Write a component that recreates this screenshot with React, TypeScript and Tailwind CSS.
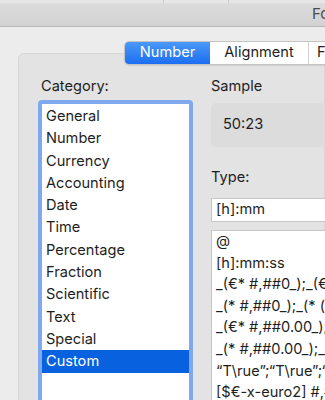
import React from 'react'

const categories = [
  'General',
  'Number',
  'Currency',
  'Accounting',
  'Date',
  'Time',
  'Percentage',
  'Fraction',
  'Scientific',
  'Text',
  'Special',
  'Custom',
]

const formats = [
  '@',
  '[h]:mm:ss',
  '_(€* #,##0_);_(€* (#,##0);_(€* "-"_);_(@_)',
  '_(* #,##0_);_(* (#,##0);_(* "-"_);_(@_)',
  '_(€* #,##0.00_);_(€* (#,##0.00);_(€* "-"??_);_(@_)',
  '_(* #,##0.00_);_(* (#,##0.00);_(* "-"??_);_(@_)',
  '“T\\rue”;“T\\rue”;“F\\alse”',
  '[$€-x-euro2] #,##0.00',
  '0.00%',
]

const tabs = ['Number', 'Alignment', 'Font']

export default function App() {
  return (
    <div
      className="h-[400px] w-[325px] overflow-hidden bg-[#ececec] text-[14.6px] text-[#1e1e1e]"
      style={{ fontFamily: 'Inter, "Noto Sans", sans-serif' }}
    >
      {/* toolbar remnant + title bar */}
      <div className="flex h-[3px] bg-[#e6e6e6]">
        <div className="w-[163px]" />
        <div className="w-px bg-[#c9c9c9]" />
        <div className="w-[64px]" />
        <div className="w-px bg-[#c9c9c9]" />
      </div>
      <div className="flex h-[24px] items-center border-b border-[#b9b9b9] bg-gradient-to-b from-[#dcdcdc] to-[#d2d2d2] pl-[312px]">
        <span className="whitespace-nowrap text-[15px] text-[#4a4a4a]">Format Cells</span>
      </div>

      {/* tabs */}
      <div className="relative z-10 mt-[14px] flex h-[24px] pl-[124px]">
        <div className="flex shrink-0 overflow-hidden rounded-[5px] border border-[#c4c4c4] bg-white shadow-[0_1px_1px_rgba(0,0,0,0.08)]">
          {tabs.map((t, i) => (
            <div
              key={t}
              className={
                i === 0
                  ? 'flex w-[85px] shrink-0 items-center justify-center bg-gradient-to-b from-[#4a98f7] to-[#1b6ef0] text-white'
                  : i === 1
                    ? 'flex w-[99px] shrink-0 items-center justify-center border-r border-[#d2d2d2] text-[#1e1e1e]'
                    : 'flex w-[60px] shrink-0 items-center justify-start pl-[8px] text-[#1e1e1e]'
              }
            >
              {t}
            </div>
          ))}
        </div>
      </div>

      {/* group box */}
      <div className="ml-[18px] -mt-[12px] h-[400px] rounded-[6px] border border-[#d6d6d6] bg-[#e3e3e3] pl-[19px] pt-[24px]">
        <div className="flex gap-[18px]">
          <div className="w-[155px] shrink-0">
            <div className="pl-[3px] leading-[17px]">Category:</div>
            <div className="mt-[5px] h-[320px] rounded-[4px] border-[4px] border-[#7fa8ee] bg-white pt-[1px]">
              {categories.map((c) => (
                <div
                  key={c}
                  className={
                    c === 'Custom'
                      ? 'bg-[#0862e0] pl-[4px] leading-[22.3px] text-white'
                      : 'pl-[4px] leading-[22.3px]'
                  }
                >
                  {c}
                </div>
              ))}
            </div>
          </div>

          <div className="w-[200px] shrink-0">
            <div className="leading-[17px]">Sample</div>
            <div className="mt-[8px] flex h-[44px] items-center rounded-[5px] bg-[#dcdcdc] pl-[12px]">50:23</div>
            <div className="mt-[22px] leading-[17px]">Type:</div>
            <div className="mt-[12px] flex h-[24px] items-center border border-[#c6c6c6] bg-white pl-[4px]">[h]:mm</div>
            <div className="mt-[8px] h-[200px] overflow-hidden border border-[#c6c6c6] bg-white">
              {formats.map((f) => (
                <div key={f} className="whitespace-nowrap pl-[4px] leading-[21.6px]">
                  {f}
                </div>
              ))}
            </div>
          </div>
        </div>
      </div>
    </div>
  )
}
